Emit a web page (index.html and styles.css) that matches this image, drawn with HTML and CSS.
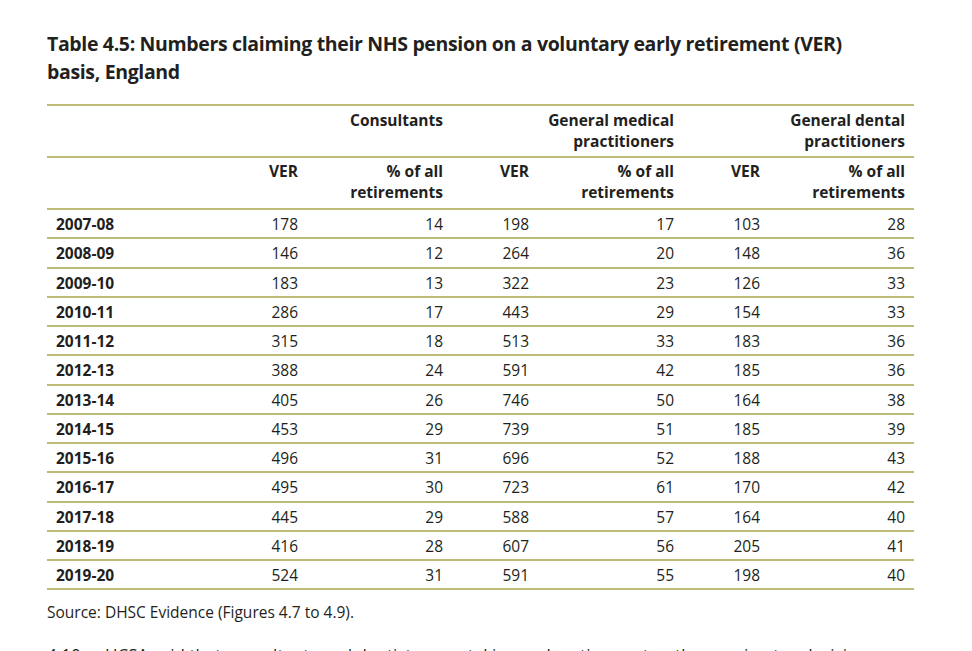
FILE: index.html
```html
<!DOCTYPE html>
<html lang="en">
<head>
<meta charset="utf-8">
<title>Table 4.5</title>
<link rel="stylesheet" href="styles.css">
</head>
<body>
<main class="page">
  <h1 class="title">Table 4.5: Numbers claiming their NHS pension on a voluntary early retirement (VER) basis, England</h1>
  <table class="data">
    <colgroup>
      <col class="c-label">
      <col class="c-ver"><col class="c-pct">
      <col class="c-ver"><col class="c-pct">
      <col class="c-ver"><col class="c-pct">
    </colgroup>
    <thead>
      <tr class="group-row">
        <th></th>
        <th colspan="2" class="num">Consultants</th>
        <th colspan="2" class="num">General medical<br>practitioners</th>
        <th colspan="2" class="num">General dental<br>practitioners</th>
      </tr>
      <tr class="sub-row">
        <th></th>
        <th class="num">VER</th><th class="num">% of all<br>retirements</th>
        <th class="num">VER</th><th class="num">% of all<br>retirements</th>
        <th class="num">VER</th><th class="num">% of all<br>retirements</th>
      </tr>
    </thead>
    <tbody>
      <tr><th>2007-08</th><td>178</td><td>14</td><td>198</td><td>17</td><td>103</td><td>28</td></tr>
      <tr><th>2008-09</th><td>146</td><td>12</td><td>264</td><td>20</td><td>148</td><td>36</td></tr>
      <tr><th>2009-10</th><td>183</td><td>13</td><td>322</td><td>23</td><td>126</td><td>33</td></tr>
      <tr><th>2010-11</th><td>286</td><td>17</td><td>443</td><td>29</td><td>154</td><td>33</td></tr>
      <tr><th>2011-12</th><td>315</td><td>18</td><td>513</td><td>33</td><td>183</td><td>36</td></tr>
      <tr><th>2012-13</th><td>388</td><td>24</td><td>591</td><td>42</td><td>185</td><td>36</td></tr>
      <tr><th>2013-14</th><td>405</td><td>26</td><td>746</td><td>50</td><td>164</td><td>38</td></tr>
      <tr><th>2014-15</th><td>453</td><td>29</td><td>739</td><td>51</td><td>185</td><td>39</td></tr>
      <tr><th>2015-16</th><td>496</td><td>31</td><td>696</td><td>52</td><td>188</td><td>43</td></tr>
      <tr><th>2016-17</th><td>495</td><td>30</td><td>723</td><td>61</td><td>170</td><td>42</td></tr>
      <tr><th>2017-18</th><td>445</td><td>29</td><td>588</td><td>57</td><td>164</td><td>40</td></tr>
      <tr><th>2018-19</th><td>416</td><td>28</td><td>607</td><td>56</td><td>205</td><td>41</td></tr>
      <tr><th>2019-20</th><td>524</td><td>31</td><td>591</td><td>55</td><td>198</td><td>40</td></tr>
    </tbody>
  </table>
  <p class="source">Source: DHSC Evidence (Figures 4.7 to 4.9).</p>
  <p class="para"><span class="para-num">4.10</span>HCSA said that consultants and dentists were taking early retirement as the pension tax decision</p>
</main>
</body>
</html>
```

FILE: styles.css
```css
html, body {
  margin: 0;
  padding: 0;
  background: #ffffff;
}

body {
  font-family: "Open Sans", "Liberation Sans", sans-serif;
  color: #231f20;
  overflow: hidden;
  height: 651px;
}

.page {
  padding: 30px 0 0 47px;
  width: 865px;
}

.title {
  margin: 0 0 18px 0;
  max-width: 820px;
  font-size: 19.5px;
  line-height: 28px;
  font-weight: 700;
  letter-spacing: -0.35px;
}

.data {
  width: 865px;
  border-collapse: collapse;
  table-layout: fixed;
  font-size: 15.5px;
  line-height: 21px;
}

.c-label { width: 174px; }
.c-ver { width: 86px; }
.c-pct { width: 145px; }

.data th,
.data td {
  padding: 0 9px;
  font-weight: 400;
  text-align: right;
  vertical-align: top;
}

.data thead th {
  font-weight: 700;
}

.data thead tr {
  border-top: 2px solid #bcbc78;
}

.group-row th {
  padding-top: 4px;
  padding-bottom: 4px;
}

.sub-row th {
  padding-top: 3px;
  padding-bottom: 5px;
}

.data tbody tr {
  border-top: 2px solid #bcbc78;
}

.data tbody tr:last-child {
  border-bottom: 2px solid #bcbc78;
}

.data tbody th,
.data tbody td {
  height: 29.25px;
  padding-top: 4px;
  padding-bottom: 0;
  box-sizing: border-box;
}

.data tbody th {
  font-weight: 700;
  text-align: left;
}

.source {
  margin: 12px 0 0 0;
  font-size: 15.5px;
  line-height: 21px;
}

.para {
  margin: 21px 0 0 0;
  font-size: 17px;
  line-height: 22px;
}

.para-num {
  display: inline-block;
  width: 58px;
}
```
